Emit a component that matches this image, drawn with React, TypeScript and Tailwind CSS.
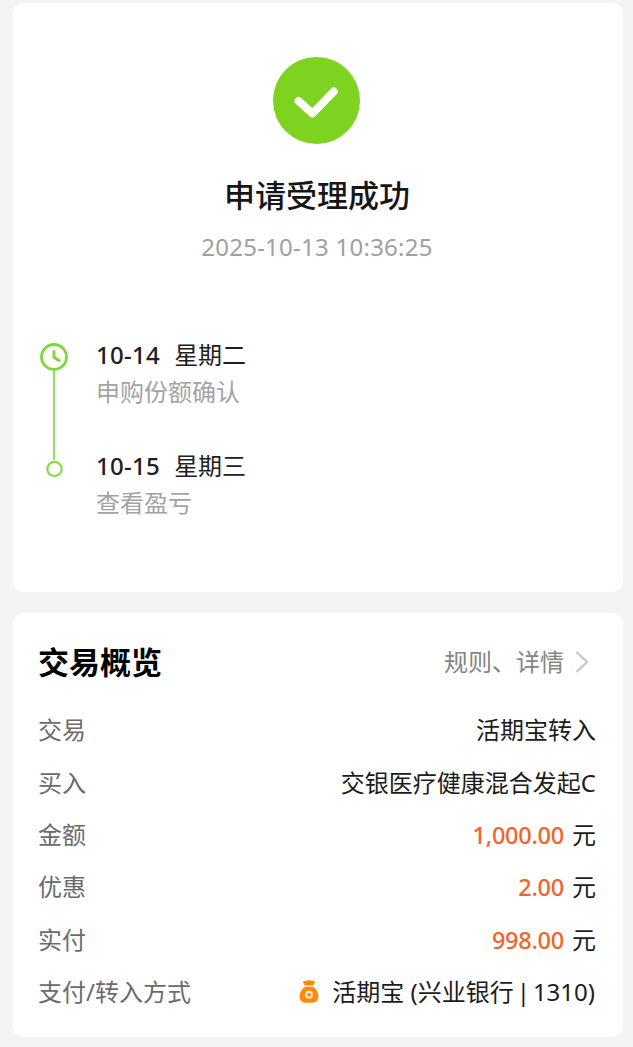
import type { ReactNode } from "react";

function MoneyBag() {
  return (
    <svg width="20" height="24" viewBox="0 0 20 24" fill="none">
      <path
        d="M4.6 1.2C6 .2 7.2 1 8.200.6c1.100-.6 2.500-.6 3.600 0 1 .5 2.200-.4 3.600.6.7.5.6 1.200.2 1.900L14.200 5.400H5.800L4.400 3.100c-.4-.7-.5-1.400.2-1.900Z"
        fill="#FF8A0A"
      />
      <path
        d="M5.800 6.700h8.400c3.300 2.300 5.300 6 5.300 9.600 0 4.200-2.500 6.500-6.300 6.500H6.800C3 22.800.5 20.500.5 16.300c0-3.600 2-7.300 5.300-9.600Z"
        fill="#FF8A0A"
      />
      <circle cx="10" cy="14.700" r="2.900" stroke="#FFF3E0" strokeWidth="1.900" />
    </svg>
  );
}

function Row({ label, children }: { label: string; children: ReactNode }) {
  return (
    <div className="flex h-[52.4px] items-center justify-between">
      <span className="text-[#6b6b6b]">{label}</span>
      <div className="flex items-center text-[#1c1c1c]">{children}</div>
    </div>
  );
}

function Amount({ value }: { value: string }) {
  return (
    <>
      <span className="mr-2 text-[23.5px] font-medium tracking-[-0.25px] text-[#F4622A]">
        {value}
      </span>
      <span>元</span>
    </>
  );
}

export default function App() {
  return (
    <div className="h-[1047px] w-[633px] bg-[#f4f4f4] pt-[3px] pr-[10.5px] pl-[12.5px] font-['Noto_Sans','Noto_Sans_CJK_SC',sans-serif] text-[24px] leading-[36px] whitespace-nowrap">
      <section className="flex h-[589px] flex-col rounded-[10px] bg-white pt-[54px]">
        <svg className="ml-[260.5px]" width="88" height="88" viewBox="0 0 88 88" fill="none">
          <circle cx="43.500" cy="43.500" r="43.500" fill="#7ED321" />
          <path
            d="M25.500 44 39.500 56.500 60.800 34.500"
            stroke="#fff"
            strokeWidth="7.800"
            strokeLinecap="round"
            strokeLinejoin="round"
          />
        </svg>
        <h1 className="mt-[27px] pr-px text-center text-[31px] leading-[46px] font-medium text-[#161616]">
          申请受理成功
        </h1>
        <p className="mt-[11px] pr-px text-center tracking-[0.25px] text-[#a0a0a0]">
          2025-10-13 10:36:25
        </p>

        <div className="mt-[72px] flex pl-[26.5px]">
          <div className="flex w-[29px] flex-col items-center pt-[6px]">
            <svg width="28" height="28" viewBox="0 0 28 28" fill="none" stroke="#7ED83A">
              <circle cx="14" cy="14" r="12.500" strokeWidth="2.800" />
              <path d="M14 8.500v5.800l5.200 3.200" strokeWidth="3" strokeLinecap="round" />
            </svg>
            <div className="h-[89px] w-[2px] bg-[#96DC62]" />
            <svg width="18" height="18" viewBox="0 0 18 18" fill="none" stroke="#88DA48">
              <circle cx="9.500" cy="9" r="7.200" strokeWidth="2.200" />
            </svg>
          </div>
          <div className="ml-[28px]">
            <div className="flex gap-[14px] text-[#202020]">
              <span className="font-medium tracking-[0.3px]">10-14</span>
              <span>星期二</span>
            </div>
            <p className="mt-px text-[#a3a3a3]">申购份额确认</p>
            <div className="mt-[38px] flex gap-[14px] text-[#202020]">
              <span className="font-medium tracking-[0.3px]">10-15</span>
              <span>星期三</span>
            </div>
            <p className="mt-px text-[#a3a3a3]">查看盈亏</p>
          </div>
        </div>
      </section>

      <section className="mt-[21px] h-[424px] rounded-[10px] bg-white pt-[26px] pr-[26.5px] pl-[25.5px]">
        <div className="flex h-[46px] items-center justify-between">
          <h2 className="text-[31px] leading-[46px] font-bold text-black">交易概览</h2>
          <div className="flex items-center text-[#858585]">
            <span>规则、详情</span>
            <svg className="mr-[7px] ml-[11px]" width="14" height="24" viewBox="0 0 14 24" fill="none">
              <path d="M1.500 2 12 12 1.500 22" stroke="#C8C8C8" strokeWidth="2.400" />
            </svg>
          </div>
        </div>
        <div className="mt-[19px]">
          <Row label="交易">活期宝转入</Row>
          <Row label="买入">交银医疗健康混合发起C</Row>
          <Row label="金额">
            <Amount value="1,000.00" />
          </Row>
          <Row label="优惠">
            <Amount value="2.00" />
          </Row>
          <Row label="实付">
            <Amount value="998.00" />
          </Row>
          <Row label="支付/转入方式">
            <MoneyBag />
            <span className="ml-[13px]">活期宝 (兴业银行</span>
            <span className="mx-[3px]">|</span>
            <span className="mr-px">1310)</span>
          </Row>
        </div>
      </section>
    </div>
  );
}
